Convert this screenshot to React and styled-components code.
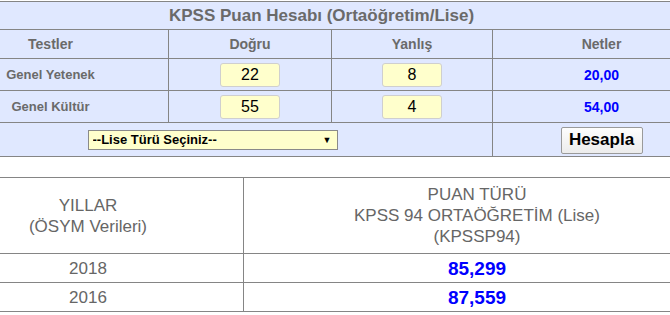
import React from "react";
import styled, { createGlobalStyle } from "styled-components";

const Global = createGlobalStyle`
  html, body { margin: 0; padding: 0; background: #fff; }
  body { font-family: "Liberation Sans", Arial, sans-serif; overflow: hidden; }
`;

const Page = styled.div`
  width: 670px;
  overflow: hidden;
  padding-top: 1px;
`;

const Table = styled.table`
  border-collapse: collapse;
  width: 778px;
  margin-left: -68px;
  table-layout: fixed;
  background: ${(p) => p.$bg || "#fff"};
  margin-top: ${(p) => p.$mt || 0}px;
`;

const Cell = styled.td`
  border: 1px solid #858585;
  text-align: center;
  vertical-align: middle;
  padding: 0;
  height: ${(p) => p.$h}px;
  line-height: 16px;
  color: #6a6a6a;
  font-weight: bold;
  font-size: 14px;
`;

const Title = styled(Cell)`
  font-size: 17px;
  line-height: 19px;
  border-left: none;
  border-right: none;
`;

const Label = styled(Cell)`
  font-size: 13px;
`;

const Net = styled(Cell)`
  color: #0000ff;
  font-size: 14px;
`;

const NumInput = styled.input`
  display: block;
  margin: 0 auto;
  width: 60px;
  height: 24px;
  box-sizing: border-box;
  border: 1px solid #cfcfcf;
  border-radius: 3px;
  background: #ffffcc;
  font-family: "Liberation Sans", Arial, sans-serif;
  font-size: 16px;
  text-align: center;
  color: #000;
  padding: 0;
  outline: none;
`;

const SelectWrap = styled.div`
  position: relative;
  margin: 0 auto;
  width: 250px;
  height: 20px;
`;

const Select = styled.select`
  display: block;
  appearance: none;
  -webkit-appearance: none;
  width: 250px;
  height: 20px;
  box-sizing: border-box;
  border: 1px solid #8a8a8a;
  background: #ffffcc;
  font-family: "Liberation Sans", Arial, sans-serif;
  font-size: 13px;
  font-weight: bold;
  color: #000;
  padding: 0 0 0 4px;
  border-radius: 0;
  outline: none;
`;

const Arrow = styled.span`
  position: absolute;
  right: 6px;
  top: 4px;
  font-size: 9px;
  line-height: 12px;
  color: #000;
  pointer-events: none;
`;

const Button = styled.button`
  display: block;
  margin: 1px auto 0;
  width: 82px;
  height: 27px;
  box-sizing: border-box;
  border: 1px solid #9a9a9a;
  border-radius: 2px;
  background: linear-gradient(#fdfdfd, #ececec);
  font-family: "Liberation Sans", Arial, sans-serif;
  font-size: 17px;
  font-weight: bold;
  color: #000;
  padding: 0;
`;

const Head = styled.td`
  border: 1px solid #858585;
  text-align: center;
  vertical-align: middle;
  color: #666;
  font-size: 17px;
  font-weight: normal;
  line-height: 21px;
  height: ${(p) => p.$h}px;
  padding: 0;
`;

const Year = styled(Head)``;

const Score = styled(Head)`
  color: #0000ff;
  font-weight: bold;
  font-size: 19px;
`;

const rows = [
  { label: "Genel Yetenek", d: "22", y: "8", n: "20,00" },
  { label: "Genel Kültür", d: "55", y: "4", n: "54,00" },
];

const years = [
  { y: "2018", s: "85,299" },
  { y: "2016", s: "87,559" },
];

export default function App() {
  return (
    <>
      <Global />
      <Page>
        <Table $bg="#e0e8ff">
          <colgroup>
            <col style={{ width: 236 }} />
            <col style={{ width: 163 }} />
            <col style={{ width: 161 }} />
            <col style={{ width: 218 }} />
          </colgroup>
          <tbody>
            <tr>
              <Title colSpan={4} $h={27}>KPSS Puan Hesabı (Ortaöğretim/Lise)</Title>
            </tr>
            <tr>
              <Cell $h={28}>Testler</Cell>
              <Cell $h={28}>Doğru</Cell>
              <Cell $h={28}>Yanlış</Cell>
              <Cell $h={28}>Netler</Cell>
            </tr>
            {rows.map((r) => (
              <tr key={r.label}>
                <Label $h={31}>{r.label}</Label>
                <Cell $h={31}>
                  <NumInput defaultValue={r.d} />
                </Cell>
                <Cell $h={31}>
                  <NumInput defaultValue={r.y} />
                </Cell>
                <Net $h={31}>{r.n}</Net>
              </tr>
            ))}
            <tr>
              <Cell colSpan={3} $h={33}>
                <SelectWrap>
                  <Select defaultValue="">
                    <option value="">--Lise Türü Seçiniz--</option>
                  </Select>
                  <Arrow>▼</Arrow>
                </SelectWrap>
              </Cell>
              <Cell $h={33}>
                <Button>Hesapla</Button>
              </Cell>
            </tr>
          </tbody>
        </Table>

        <Table $mt={20}>
          <colgroup>
            <col style={{ width: 311 }} />
            <col style={{ width: 467 }} />
          </colgroup>
          <tbody>
            <tr>
              <Head $h={75}>
                YILLAR
                <br />
                (ÖSYM Verileri)
              </Head>
              <Head $h={75}>
                PUAN TÜRÜ
                <br />
                KPSS 94 ORTAÖĞRETİM (Lise)
                <br />
                (KPSSP94)
              </Head>
            </tr>
            {years.map((r) => (
              <tr key={r.y}>
                <Year $h={28}>{r.y}</Year>
                <Score $h={28}>{r.s}</Score>
              </tr>
            ))}
          </tbody>
        </Table>
      </Page>
    </>
  );
}
